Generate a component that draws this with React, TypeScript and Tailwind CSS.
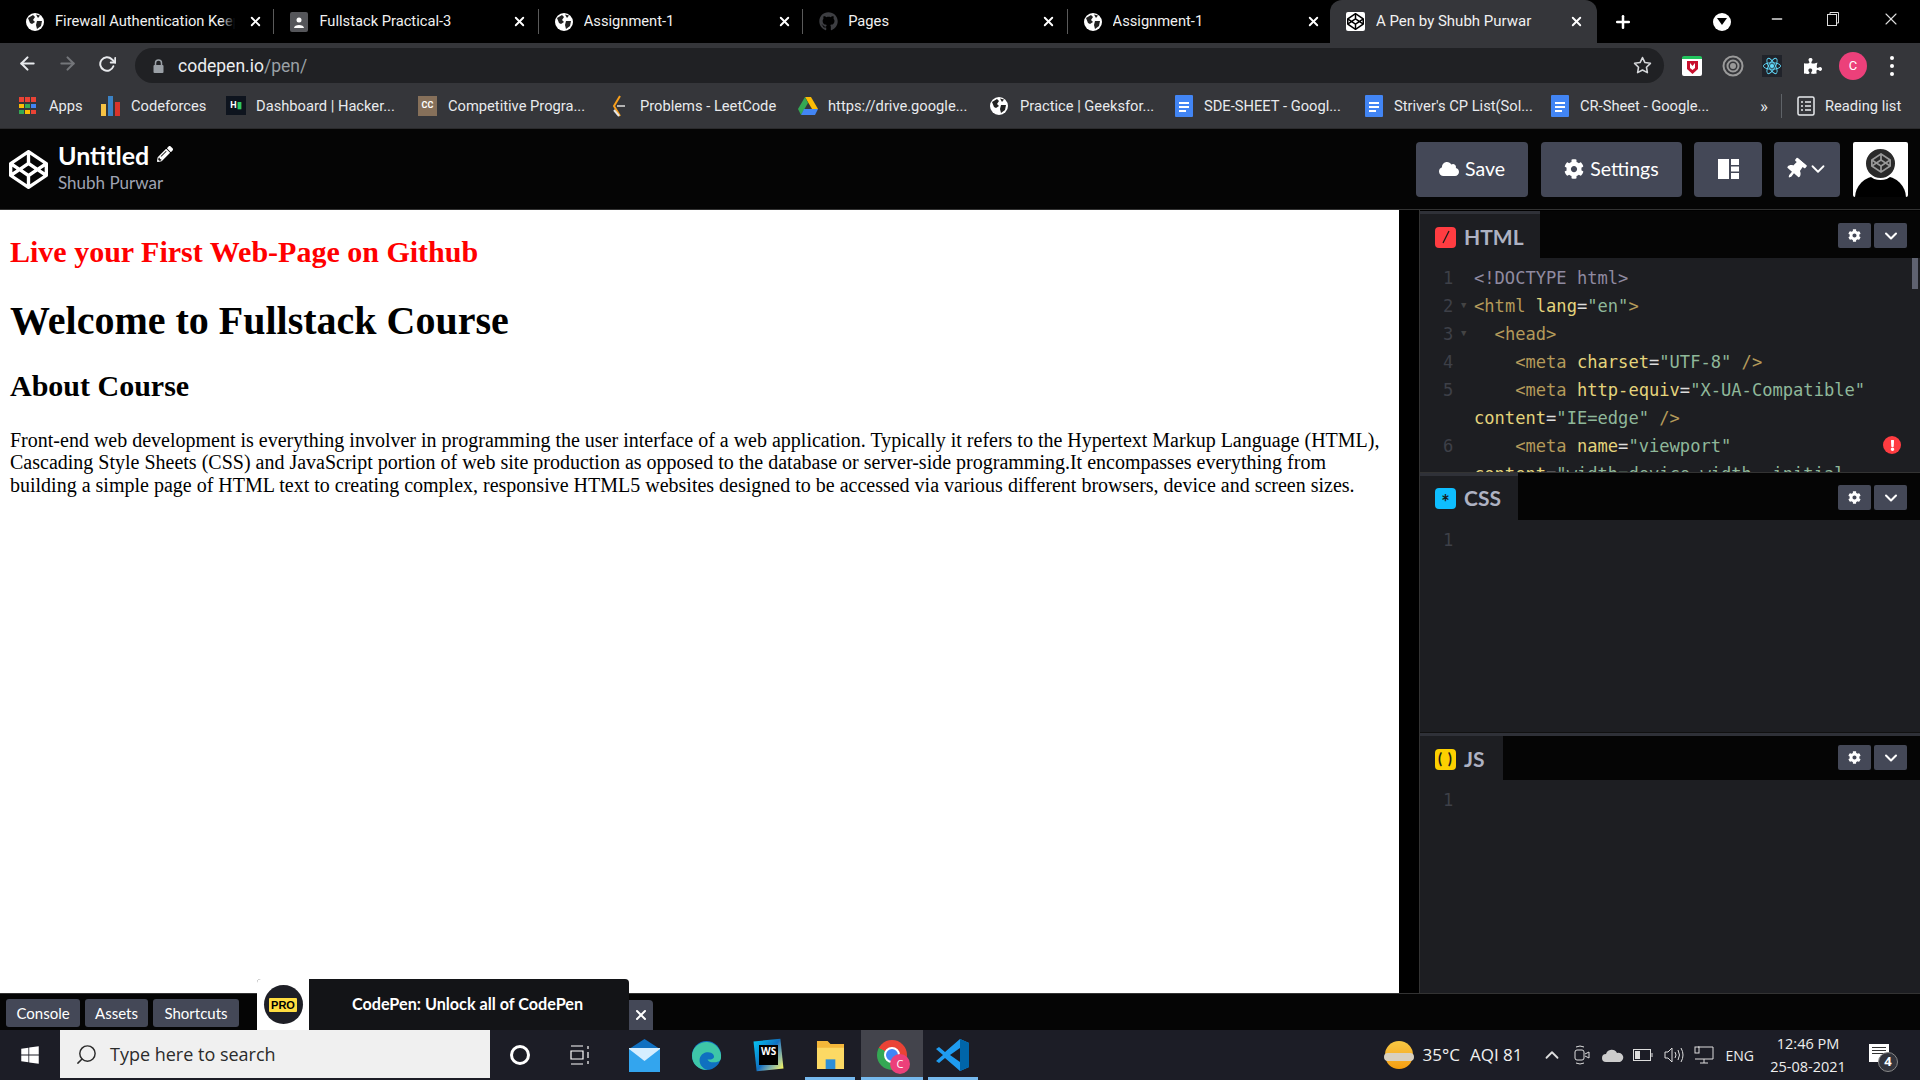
import React from "react";
import { FaCodepen, FaPencilAlt, FaCloud, FaCog, FaThumbtack, FaGithub, FaWindows, FaPuzzlePiece, FaExclamation } from "react-icons/fa";
import { FiArrowLeft, FiArrowRight, FiRotateCw, FiStar, FiSearch, FiChevronUp, FiX, FiPlus, FiMinus, FiChevronDown } from "react-icons/fi";

const Globe = ({ s = 18 }: { s?: number }) => (
  <svg width={s} height={s} viewBox="0 0 18 18" className="shrink-0">
    <circle cx="9" cy="9" r="9" fill="#fff" />
    <path d="M2 5 L7 2 L9 4 L7 7 L9 9 L6 11 L4 10 Z M11 8 L16 8 L15 13 L11 16 L10 12 Z M10 1.500 L14 2.500 L12 5 Z" fill="#222" />
  </svg>
);

const CpFav = () => (
  <div className="w-[19px] h-[19px] bg-white rounded-[2px] flex items-center justify-center shrink-0"><FaCodepen className="text-black text-[17px]" /></div>
);

const PersonFav = () => (
  <div className="w-[18px] h-[20px] bg-[#55565a] rounded-[2px] flex items-center justify-center shrink-0">
    <svg width="12" height="14" viewBox="0 0 12 14"><circle cx="6" cy="5" r="2.500" fill="#fff" /><path d="M1 13c0-4 10-4 10 0z" fill="#fff" /></svg>
  </div>
);

const tabs: { t: string; icon: React.ReactNode }[] = [
  { t: "Firewall Authentication Keep", icon: <Globe /> },
  { t: "Fullstack Practical-3", icon: <PersonFav /> },
  { t: "Assignment-1", icon: <Globe /> },
  { t: "Pages", icon: <FaGithub className="text-[#3d3e42] text-[19px] shrink-0" /> },
  { t: "Assignment-1", icon: <Globe /> },
];

function TabBar() {
  return (
    <div className="h-[43px] bg-black flex items-stretch pl-[10px] text-white text-[14.700px] relative">
      {tabs.map((tab, i) => (
        <div key={i} className="w-[264.400px] flex items-center relative pl-[16px] shrink-0">
          <div className="w-[29px] shrink-0">{tab.icon}</div>
          <div className="w-[184px] shrink-0 relative">
            <div className="w-[180px] overflow-hidden whitespace-nowrap text-[#f1f1f1]">{tab.t}</div>
            <div className={i === 0 ? "absolute right-[4px] top-0 bottom-0 w-[14px] bg-gradient-to-r from-transparent to-black" : "hidden"} />
          </div>
          <FiX className="text-white text-[15px] ml-[9px] shrink-0" strokeWidth={3} />
          <div className={i === 4 ? "hidden" : "absolute right-0 top-[9px] bottom-[9px] w-px bg-[#5a5a5a]"} />
        </div>
      ))}
      <div className="w-[267px] ml-[-2px] bg-[#35363a] rounded-t-[12px] flex items-center pl-[16px] shrink-0 text-[15px]">
        <div className="w-[30px] shrink-0"><CpFav /></div>
        <div className="w-[183px] overflow-hidden whitespace-nowrap text-[#f1f1f1] shrink-0">A Pen by Shubh Purwar</div>
        <FiX className="text-white text-[15px] ml-[10px] shrink-0" strokeWidth={3} />
      </div>
      <div className="flex items-center ml-[16px]"><FiPlus className="text-white text-[20px]" strokeWidth={3} /></div>
      <div className="flex items-center ml-[80px]">
        <div className="w-[18px] h-[18px] rounded-full bg-white flex items-center justify-center"><div className="w-0 h-0 border-l-[5px] border-r-[5px] border-t-[7px] border-l-transparent border-r-transparent border-t-black" /></div>
      </div>
      <div className="flex items-center ml-[36px] w-[20px] justify-center -mt-[6px]"><FiMinus className="text-[#ddd] text-[16px]" /></div>
      <div className="flex items-center ml-[39px] -mt-[6px]">
        <svg width="14" height="16" viewBox="0 0 14 16" fill="none" stroke="#ddd"><rect x="1.500" y="3.500" width="9" height="11" /><path d="M4 3V1.500h8.500V12H11" /></svg>
      </div>
      <div className="flex items-center ml-[41px] -mt-[6px]"><FiX className="text-[#ddd] text-[20px]" strokeWidth={1.300} /></div>
    </div>
  );
}

function Toolbar() {
  return (
    <div className="h-[41px] bg-[#35363a] flex items-center relative">
      <div className="w-[135px] flex items-center text-[#e8eaed] pl-[17px] gap-[19px] shrink-0">
        <FiArrowLeft className="text-[21px] shrink-0" strokeWidth={2.400} />
        <FiArrowRight className="text-[21px] shrink-0 text-[#74767a]" strokeWidth={2.400} />
        <FiRotateCw className="text-[18px] shrink-0 ml-[1px]" strokeWidth={2.600} />
      </div>
      <div className="w-[1529px] h-[35px] bg-[#202124] rounded-full flex items-center pl-[18px] pr-[12px] mt-[4px] text-[17.500px] shrink-0">
        <svg width="11" height="14" viewBox="0 0 11 14" className="shrink-0"><path d="M2.500 6V4a3 3 0 016 0v2" fill="none" stroke="#9aa0a6" strokeWidth="1.500" /><rect x="0.500" y="6" width="10" height="8" rx="1" fill="#9aa0a6" /></svg>
        <span className="ml-[14px] text-[#eceef0] mt-[1px]">codepen.io<span className="text-[#9aa0a6]">/pen/</span></span>
        <FiStar className="ml-auto text-[#d5d7da] text-[19px]" strokeWidth={2} />
      </div>
      <div className="flex items-center mt-[4px] ml-[18px] w-[240px] relative h-[35px]">
        <div className="w-[20px] h-[20px] bg-white rounded-[2px] border-t-[3px] border-[#22c55e] flex items-center justify-center shrink-0">
          <svg width="11" height="13" viewBox="0 0 11 13"><path d="M0 0h11v8l-5.500 5L0 8z" fill="#c8102e" /><path d="M3 2v5l2.500 2 2.500-2V2L5.500 5z" fill="#fff" /></svg>
        </div>
        <svg width="22" height="22" viewBox="0 0 22 22" className="ml-[20px] shrink-0" fill="none" stroke="#9a9a9a" strokeWidth="2"><circle cx="11" cy="11" r="9.500" /><circle cx="11" cy="11" r="5.500" /><circle cx="11" cy="11" r="2" fill="#9a9a9a" /></svg>
        <div className="w-[20px] h-[22px] ml-[18px] bg-[#20232a] flex items-center justify-center shrink-0">
          <svg width="20" height="20" viewBox="-11 -11 22 22" fill="none" stroke="#61dafb"><circle r="2" fill="#61dafb" /><ellipse rx="9.500" ry="3.600" /><ellipse rx="9.500" ry="3.600" transform="rotate(60)" /><ellipse rx="9.500" ry="3.600" transform="rotate(120)" /></svg>
        </div>
        <FaPuzzlePiece className="ml-[22px] text-white text-[18px] shrink-0" />
        <div className="w-[28px] h-[28px] ml-[17px] rounded-full bg-[#ec407a] text-white text-[13px] flex items-center justify-center shrink-0">C</div>
        <div className="flex flex-col gap-[4px] ml-[23px] shrink-0">
          <div className="w-[4px] h-[4px] rounded-full bg-white" /><div className="w-[4px] h-[4px] rounded-full bg-white" /><div className="w-[4px] h-[4px] rounded-full bg-white" />
        </div>
      </div>
    </div>
  );
}

const DocIcon = () => (
  <svg width="20" height="24" viewBox="0 0 20 24" className="shrink-0"><path d="M2 1h16a1 1 0 011 1v20a1 1 0 01-1 1H2a1 1 0 01-1-1V2a1 1 0 011-1z" fill="#4285f4" /><path d="M5 8h10v2H5zM5 12h10v2H5zM5 16h7v2H5z" fill="#fff" /></svg>
);

const marks: { w: number; t: string; i: React.ReactNode }[] = [
  { w: 82, t: "Apps", i: <div className="w-[17px] h-[17px] grid grid-cols-3 gap-[1.500px]">{["#ea4335", "#ea4335", "#ea4335", "#fbbc05", "#34a853", "#4285f4", "#34a853", "#fbbc05", "#ea4335"].map((c, k) => <span key={k} style={{ background: c }} />)}</div> },
  { w: 125, t: "Codeforces", i: <div className="w-[21px] h-[20px] flex items-end gap-[2px]"><span className="w-[5px] h-[12px] bg-[#f6c244]" /><span className="w-[5px] h-[20px] bg-[#3b82c4]" /><span className="w-[5px] h-[14px] bg-[#d9342b]" /></div> },
  { w: 192, t: "Dashboard | Hacker...", i: <div className="w-[20px] h-[19px] bg-[#0e141e] text-[9px] font-bold text-white flex items-center justify-center">H<span className="text-[#2ec866]">▮</span></div> },
  { w: 192, t: "Competitive Progra...", i: <div className="w-[19px] h-[20px] bg-[#86705a] text-[9px] font-bold text-white flex items-center justify-center">CC</div> },
  { w: 188, t: "Problems - LeetCode", i: <svg width="18" height="24" viewBox="0 0 18 24" fill="none" strokeWidth="2"><path d="M10 2L4 12l6 10" stroke="#f89f1b" /><path d="M7 12h8" stroke="#b3b3b3" /><path d="M4 16l5 6" stroke="#e8e8e8" /></svg> },
  { w: 192, t: "https://drive.google...", i: <svg width="20" height="18" viewBox="0 0 20 18"><path d="M7 0h6l7 12h-6z" fill="#fbbc05" /><path d="M7 0l3 6-7 12-3-6z" fill="#34a853" /><path d="M6 12h14l-3 6H3z" fill="#4285f4" /></svg> },
  { w: 184, t: "Practice | Geeksfor...", i: <Globe /> },
  { w: 190, t: "SDE-SHEET - Googl...", i: <DocIcon /> },
  { w: 186, t: "Striver's CP List(Sol...", i: <DocIcon /> },
  { w: 204, t: "CR-Sheet - Google...", i: <DocIcon /> },
];

function Bookmarks() {
  return (
    <div className="h-[45px] bg-[#35363a] flex items-center pl-[19px] text-[#e8eaed] text-[14.700px] border-b border-[#2a2a2c]">
      {marks.map((m, i) => (
        <div key={i} className="flex items-center shrink-0" style={{ width: m.w }}>
          <div className="w-[30px] shrink-0 flex">{m.i}</div>
          <span className="whitespace-nowrap">{m.t}</span>
        </div>
      ))}
      <span className="w-[18px] text-[17px] shrink-0 ml-[6px] leading-none">»</span>
      <div className="w-px h-[24px] bg-[#5f6368] shrink-0 ml-[3px]" />
      <svg width="18" height="20" viewBox="0 0 18 20" fill="none" stroke="#e8eaed" strokeWidth="1.500" className="ml-[15px] shrink-0"><rect x="1" y="1" width="16" height="18" rx="1.500" /><path d="M4 6h2M8 6h6M4 10h2M8 10h6M4 14h2M8 14h6" /></svg>
      <span className="ml-[10px] whitespace-nowrap">Reading list</span>
    </div>
  );
}

function Header() {
  const btn = "h-[55px] bg-[#444857] rounded-[4px] flex items-center justify-center text-white text-[19.500px] shrink-0";
  return (
    <div className="h-[81px] bg-[#050505] flex items-center border-b border-[#333] font-['Lato',sans-serif]">
      <FaCodepen className="text-white text-[39px] ml-[9px] shrink-0" />
      <div className="ml-[10px] flex flex-col">
        <div className="flex items-center h-[32px] text-white font-bold text-[25px] leading-none -mt-[5px]">Untitled<FaPencilAlt className="text-[16px] ml-[8px] -mt-[4px]" /></div>
        <div className="text-[#9fa3b2] text-[17px] leading-[22px]">Shubh Purwar</div>
      </div>
      <div className="ml-auto flex items-center pr-[12px]">
        <div className={btn + " w-[112px] gap-[6px]"}><FaCloud className="text-[20px]" />Save</div>
        <div className={btn + " w-[141px] ml-[13px] gap-[6px]"}><FaCog className="text-[20px]" />Settings</div>
        <div className={btn + " w-[68px] ml-[12px]"}>
          <svg width="21" height="20" viewBox="0 0 21 20" fill="#fff"><rect width="11" height="20" /><rect x="13" width="8" height="6" /><rect x="13" y="7.500" width="8" height="5" /><rect x="13" y="14" width="8" height="6" /></svg>
        </div>
        <div className={btn + " w-[66px] ml-[12px] gap-[1px]"}><FaThumbtack className="text-[21px] rotate-[40deg]" /><FiChevronDown className="text-[22px]" /></div>
        <div className="w-[55px] h-[55px] bg-white ml-[13px] relative overflow-hidden rounded-[2px] shrink-0">
          <div className="absolute left-[2px] right-[2px] top-[34px] h-[40px] rounded-t-[22px] bg-black" />
          <div className="absolute left-[13px] top-[5px] w-[29px] h-[29px] rounded-full bg-[#2a2a2a] border-[2px] border-white box-content flex items-center justify-center -translate-x-[2px]"><FaCodepen className="text-[#999] text-[20px]" /></div>
        </div>
      </div>
    </div>
  );
}

function Preview() {
  return (
    <div className="w-[1399px] bg-white text-black p-[10px] font-['Liberation_Serif',serif] shrink-0">
      <h2 className="text-[30px] font-bold text-[#ff0000] leading-[34px] mt-[15px]">Live your First Web-Page on Github</h2>
      <h1 className="text-[40px] font-bold leading-[46px] mt-[29px]">Welcome to Fullstack Course</h1>
      <h2 className="text-[30px] font-bold leading-[34px] mt-[25px]">About Course</h2>
      <p className="text-[20px] leading-[22.500px] mt-[25.500px]">Front-end web development is everything involver in programming the user interface of a web application. Typically it refers to the Hypertext Markup Language (HTML), Cascading Style Sheets (CSS) and JavaScript portion of web site production as opposed to the database or server-side programming.It encompasses everything from building a simple page of HTML text to creating complex, responsive HTML5 websites designed to be accessed via various different browsers, device and screen sizes.</p>
    </div>
  );
}

const P = ({ c, children }: { c: string; children: React.ReactNode }) => <span style={{ color: c }}>{children}</span>;
const br = "#b49a5a", tag = "#b49a5a", at = "#e4d47c", eq = "#dddddd", st = "#8fb89a";

const Attr = ({ n, v }: { n: string; v: string }) => <><P c={at}>{n}</P><P c={eq}>=</P><P c={st}>{v}</P></>;

function CodeLine({ n, fold, children, noNum }: { n?: number; fold?: boolean; children: React.ReactNode; noNum?: boolean }) {
  return (
    <div className="flex h-[28px] leading-[28px] whitespace-pre">
      <div className="w-[36px] pl-[23px] text-[#3e4048] relative shrink-0 box-content">{noNum ? "" : n}
        {fold ? <span className="absolute left-[41px] top-[-1px] text-[9px] text-[#444]">▼</span> : null}
      </div>
      <div className="ml-[-5px]">{children}</div>
    </div>
  );
}

function EdHead({ name, w, icon, bg, first, full }: { name: string; w: number; icon: React.ReactNode; bg: string; first?: boolean; full?: boolean }) {
  return (
    <div className={"h-[47px] bg-[#050505] flex shrink-0 relative " + (first ? "mt-[1px] " : "") + (full ? "border-t-[3px] border-[#2f3138]" : "")}>
      <div className={"bg-[#1d1e22] flex items-center pl-[15px] font-['Lato',sans-serif] font-bold text-[21px] text-[#aeb2c2] shrink-0 " + (full ? "h-[44px] pt-[2px]" : first ? "h-[47px] pt-[2px] border-t-[3px] border-[#2f3138]" : "h-[47px] border-t-[3px] border-[#2f3138]")} style={{ width: w }}>
        <div className="w-[21px] h-[21px] rounded-[4px] flex items-center justify-center text-[#1a1a1a] text-[14px] mr-[8px] shrink-0" style={{ background: bg }}>{icon}</div>{name}
      </div>
      <div className={"ml-auto flex gap-[3px] pr-[13px] " + (full ? "mt-[9px]" : "mt-[12px]")}>
        <div className="w-[33px] h-[25px] rounded-[2px] bg-[#444857] flex items-center justify-center"><FaCog className="text-white text-[13px]" /></div>
        <div className="w-[33px] h-[25px] rounded-[2px] bg-[#444857] flex items-center justify-center"><FiChevronDown className="text-white text-[20px]" strokeWidth={2.500} /></div>
      </div>
    </div>
  );
}

const mono = "font-['DejaVu_Sans_Mono',monospace] text-[17.100px]";

function Editors() {
  return (
    <div className="flex-1 flex min-w-0">
      <div className="w-[20px] bg-black shrink-0" />
      <div className="flex-1 border-l border-[#333] flex flex-col min-w-0">
        <EdHead first name="HTML" w={120} bg="#ff3c41" icon={<svg width="12" height="14" viewBox="0 0 12 14"><path d="M9 1L3 13" stroke="#1a1a1a" strokeWidth="1.200" /></svg>} />
        <div className={"h-[215px] shrink-0 bg-[#1d1e22] overflow-hidden relative pt-[6px] border-b border-[#333] " + mono}>
          <div className="absolute right-[2px] top-0 w-[6px] h-[31px] bg-[#5f6270]" />
          <CodeLine n={1}><P c="#8f8aa0">{"<!DOCTYPE html>"}</P></CodeLine>
          <CodeLine n={2} fold><P c={br}>{"<"}</P><P c={tag}>html </P><P c={at}>lang</P><P c={eq}>=</P><P c={st}>{'"en"'}</P><P c={br}>{">"}</P></CodeLine>
          <CodeLine n={3} fold><P c={br}>{"  <"}</P><P c={tag}>head</P><P c={br}>{">"}</P></CodeLine>
          <CodeLine n={4}><P c={br}>{"    <"}</P><P c={tag}>meta </P><Attr n="charset" v={'"UTF-8"'} /><P c={br}>{" />"}</P></CodeLine>
          <CodeLine n={5}><P c={br}>{"    <"}</P><P c={tag}>meta </P><Attr n="http-equiv" v={'"X-UA-Compatible"'} /></CodeLine>
          <CodeLine noNum><Attr n="content" v={'"IE=edge"'} /><P c={br}>{" />"}</P></CodeLine>
          <CodeLine n={6}><P c={br}>{"    <"}</P><P c={tag}>meta </P><Attr n="name" v={'"viewport"'} /></CodeLine>
          <CodeLine noNum><Attr n="content" v={'"width=device-width, initial'} /></CodeLine>
          <div className="absolute left-[463px] top-[178px] w-[18px] h-[18px] rounded-full bg-[#ff3c41] flex items-center justify-center"><FaExclamation className="text-white text-[11px]" /></div>
        </div>
        <EdHead name="CSS" w={98} bg="#0ebeff" icon={<span className="text-[20px] leading-none mt-[7px]">*</span>} />
        <div className={"h-[213px] shrink-0 bg-[#1d1e22] pt-[6px] border-b border-[#111] " + mono}><CodeLine n={1}>{""}</CodeLine></div>
        <EdHead full name="JS" w={83} bg="#fcd000" icon={<span className="text-[15px] font-bold leading-none tracking-[1px] -mt-[2px]">( )</span>} />
        <div className={"flex-1 bg-[#1d1e22] pt-[6px] " + mono}><CodeLine n={1}>{""}</CodeLine></div>
      </div>
    </div>
  );
}

function Footer() {
  const b = "h-[28px] bg-[#444857] rounded-[3px] text-white flex items-center justify-center shrink-0";
  return (
    <div className="h-[36px] bg-[#050505] flex items-start font-['Lato',sans-serif] text-[15px] relative pt-[5px]">
      <div className={b + " w-[74px] ml-[6px]"}>Console</div>
      <div className={b + " w-[63px] ml-[5px]"}>Assets</div>
      <div className={b + " w-[86px] ml-[5px]"}>Shortcuts</div>
      <div className="absolute left-[257px] top-[-15px] w-[372px] h-[51px] bg-[#131417] rounded-t-[4px] flex overflow-hidden">
        <div className="w-[52px] bg-white flex items-center justify-center shrink-0">
          <div className="w-[39px] h-[39px] rounded-full bg-[#1e1f26] flex items-center justify-center">
            <span className="bg-[#ffdd40] text-black text-[11px] font-bold px-[2px] leading-[14px] rounded-[1px] font-['Liberation_Sans',sans-serif]">PRO</span>
          </div>
        </div>
        <div className="flex-1 text-white font-bold text-[16.200px] flex items-center justify-center pr-[3px] whitespace-nowrap">CodePen: Unlock all of CodePen</div>
      </div>
      <div className="absolute left-[629px] top-[6px] w-[24px] h-[30px] bg-[#444857] rounded-tr-[4px] flex items-center justify-center"><FiX className="text-white text-[16px]" strokeWidth={3} /></div>
    </div>
  );
}

const Bar = ({ w, ml = 0 }: { w: number; ml?: number }) => <div className="absolute bottom-0 h-[3px] bg-[#76b9ed]" style={{ width: w, left: ml }} />;

function Taskbar() {
  const cell = "h-full flex items-center justify-center shrink-0 relative";
  return (
    <div className="h-[50px] bg-[#1c1d26] flex items-stretch text-white font-['Open_Sans',sans-serif]">
      <div className={cell + " w-[60px]"}><FaWindows className="text-[20px]" /></div>
      <div className="w-[430px] h-[48px] bg-[#f0f0f0] flex items-center pl-[15px] text-[#2b2b2b] text-[18px] shrink-0">
        <FiSearch className="text-[23px] -scale-x-100 shrink-0" strokeWidth={1.500} />
        <span className="ml-[12px]">Type here to search</span>
      </div>
      <div className={cell + " w-[60px]"}><div className="w-[20px] h-[20px] rounded-full border-[3px] border-white" /></div>
      <div className={cell + " w-[60px]"}>
        <svg width="20" height="20" viewBox="0 0 20 20" fill="none" stroke="#fff" strokeWidth="1.200"><path d="M1 1h12M1 19h12M1 6h12v8H1zM18 1v3M18 7v6M18 16v3" /></svg>
      </div>
      <div className={cell + " w-[62px] ml-[3px]"}>
        <svg width="31" height="33" viewBox="0 0 31 33"><path d="M0 10L15.500 0 31 10v23H0z" fill="#1170c0" /><path d="M0 10h31v23H0z" fill="#33a5ee" /><path d="M0 10l15.500 12L31 10v-1H0z" fill="#d6eeff" /></svg>
      </div>
      <div className={cell + " w-[62px]"}>
        <svg width="31" height="31" viewBox="0 0 32 32"><circle cx="16" cy="16" r="15" fill="#0f70c0" /><path d="M1 16A15 15 0 0131 18c0 4-4 5-8 5-3 0-5-1-6-3 6 1 8-2 6-5-3-4-12-3-14 4-1 5 2 10 8 12C8 31 1 25 1 16z" fill="#3ec6a8" /></svg>
      </div>
      <div className={cell + " w-[62px]"}>
        <div className="w-[27px] h-[30px] bg-gradient-to-br from-[#07c3f2] via-[#1170c0] to-[#fcf84a] flex items-center justify-center rotate-[-6deg]">
          <div className="w-[19px] h-[20px] bg-black text-white text-[10px] leading-[12px] font-bold pl-[2px] rotate-[6deg]">WS</div>
        </div>
      </div>
      <div className={cell + " w-[62px]"}>
        <svg width="29" height="28" viewBox="0 0 30 29"><path d="M1 0h11l3 3h14v26H1z" fill="#f4b73a" /><path d="M1 7h28v22H1z" fill="#fcd964" /><path d="M10 19h10v10H10z" fill="#2c8fd8" /></svg>
        <Bar w={50} ml={6} />
      </div>
      <div className={cell + " w-[62px] bg-[#43444c]"}>
        <div className="relative w-[30px] h-[30px]">
          <div className="w-[30px] h-[30px] rounded-full" style={{ background: "conic-gradient(#ea4335 0 33%, #fbbc05 33% 50%, #34a853 50% 83%, #ea4335 83%)" }} />
          <div className="absolute left-[9px] top-[9px] w-[12px] h-[12px] rounded-full bg-[#4285f4] border-2 border-white box-content -translate-x-[2px] -translate-y-[2px]" />
          <div className="absolute left-[13px] top-[14px] w-[20px] h-[20px] rounded-full bg-[#ec407a] text-[11px] flex items-center justify-center">C</div>
        </div>
        <Bar w={62} />
      </div>
      <div className={cell + " w-[60px]"}>
        <svg width="34" height="34" viewBox="0 0 34 34"><path d="M24 1l9 4v24l-9 4L9 20l-6 5-3-2 7-6-7-6 3-2 6 5z" fill="#1f9cf0" /><path d="M24 1l9 4v24l-9 4z" fill="#0065a9" /><path d="M24 10L14 17l10 7z" fill="#1c1d26" /></svg>
        <Bar w={50} ml={5} />
      </div>
      <div className="ml-auto flex items-center relative shrink-0 text-[17px]">
        <div className="w-[28px] h-[28px] rounded-full bg-gradient-to-b from-[#f7c843] to-[#f59e0b] relative mr-[9px] shrink-0"><div className="absolute left-[-1px] right-[-1px] top-[12px] h-[8px] rounded-full bg-[#d8d0c0]" /></div>
        <span className="text-[#f0f0f0] whitespace-nowrap">35°C</span>
        <span className="ml-[10px] text-[#f0f0f0] whitespace-nowrap">AQI 81</span>
        <FiChevronUp className="ml-[18px] text-[22px] text-[#ddd] shrink-0" />
        <svg width="16" height="20" viewBox="0 0 16 20" className="ml-[11px] shrink-0" fill="none" stroke="#ddd"><rect x="1" y="5" width="9" height="10" rx="2" /><path d="M11 9l4-2v6l-4-2M2 2q4-2 8 0M2 18q4 2 8 0" /></svg>
        <svg width="22" height="14" viewBox="0 0 22 14" className="ml-[12px] shrink-0" fill="#ccc"><path d="M4 14a4 4 0 010-8 6 6 0 0111-1 4.500 4.500 0 013 9z" /></svg>
        <svg width="20" height="12" viewBox="0 0 20 12" className="ml-[9px] shrink-0" fill="none" stroke="#ddd"><rect x="0.500" y="0.500" width="17" height="11" /><rect x="2" y="2" width="5" height="8" fill="#ddd" stroke="none" /><path d="M19 4v4" /></svg>
        <svg width="20" height="20" viewBox="0 0 20 20" className="ml-[11px] shrink-0" fill="none" stroke="#ddd"><path d="M1 7h3l4-4v14l-4-4H1zM11 7q2 3 0 6M14 5q3 5 0 10M17 3q4 7 0 14" /></svg>
        <svg width="20" height="18" viewBox="0 0 20 18" className="ml-[10px] shrink-0" fill="none" stroke="#ddd"><path d="M4 1h15v12H1M10 13v4M6 17h8" /><rect x="1" y="1" width="4" height="6" /></svg>
        <span className="ml-[12px] text-[14px] text-[#eee] whitespace-nowrap">ENG</span>
        <div className="w-[108px] flex flex-col items-center text-[14.500px] leading-[23px] text-[#eee]"><span>12:46 PM</span><span>25-08-2021</span></div>
        <div className="relative w-[20px] h-[18px] ml-[7px] mr-[31px] bg-white mb-[4px] shrink-0 flex flex-col gap-[2px] p-[3px]">
          <div className="h-[1px] bg-[#333]" /><div className="h-[1px] bg-[#333]" /><div className="h-[1px] bg-[#333]" />
          <div className="absolute left-[9px] top-[8px] w-[20px] h-[20px] rounded-full bg-[#33343c] border border-[#888] text-[13px] text-white font-bold flex items-center justify-center">4</div>
        </div>
      </div>
    </div>
  );
}

export default function App() {
  return (
    <div className="w-[1920px] h-[1080px] overflow-hidden flex flex-col bg-black font-['Roboto',sans-serif]">
      <TabBar />
      <Toolbar />
      <Bookmarks />
      <Header />
      <div className="flex h-[784px] border-b border-[#333] shrink-0">
        <Preview />
        <Editors />
      </div>
      <Footer />
      <Taskbar />
    </div>
  );
}
